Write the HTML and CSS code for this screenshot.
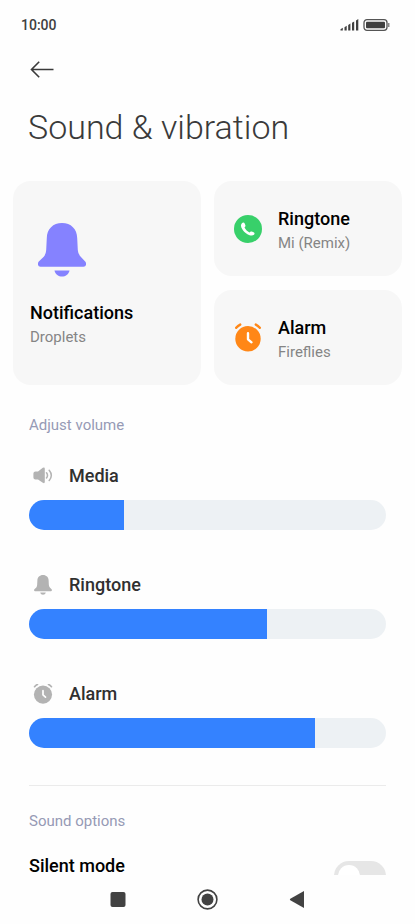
FILE: index.html
```html
<!DOCTYPE html>
<html lang="en">
<head>
<meta charset="utf-8">
<meta name="viewport" content="width=device-width, initial-scale=1">
<title>Sound &amp; vibration</title>
<link rel="stylesheet" href="styles.css">
</head>
<body>
<svg class="defs" aria-hidden="true">
  <symbol id="bell" viewBox="0 0 48 54">
    <path d="M24 0C33 0 39 6 39.200 15L39.800 27Q40 31 42.500 33.500L47.200 38.500C49 40.500 48 43.800 45.500 43.800H2.500C0 43.800-1 40.500.8 38.500L6 33.500Q8 31 8.200 27L8.800 15C9 6 15 0 24 0Z"/>
    <path d="M16.500 47.500H31.500C30.500 51.500 27.500 53.500 24 53.500S17.500 51.500 16.500 47.500Z"/>
  </symbol>
  <symbol id="clock" viewBox="0 0 28 28">
    <circle cx="14" cy="14.800" r="12.700"/>
    <path class="stroke-self" d="M2.200 3.800Q4 1.600 6.200.6M25.800 3.800Q24 1.600 21.800.6"/>
    <path class="stroke-hand" d="M14 9.300V15.300L17.500 18.300"/>
  </symbol>
</svg>

<div class="status-bar">
  <time>10:00</time>
  <div class="status-icons">
    <svg width="19" height="12" viewBox="0 0 19 12" aria-hidden="true">
      <path d="M.5 10.300l2.300-1.500V11.500H.5ZM4.500 8.200l2.200-1.400V11.500H4.500ZM8.200 6l2.200-1.400V11.500H8.200ZM12 3.800l2.200-1.400V11.500H12ZM16 1.400l2.300-1.400V11.500H16Z"/>
    </svg>
    <svg width="28" height="12" viewBox="0 0 28 12" aria-hidden="true">
      <rect class="battery-shell" x="1" y="0.700" width="23" height="10.600" rx="3"/>
      <rect x="3" y="2.800" width="19" height="6.400" rx="1"/>
      <path class="battery-tip" d="M25 4h1.500v4H25z"/>
    </svg>
  </div>
</div>

<main class="content">
  <header class="header">
    <button class="back" type="button" aria-label="Back">
      <svg width="24" height="18" viewBox="0 0 24 18" aria-hidden="true"><path d="M23.500 9.500H1.500M9.200 1.800L1.500 9.500L9.200 17.200"/></svg>
    </button>
    <h1>Sound &amp; vibration</h1>
  </header>

  <div class="cards">
    <button class="card card-tall" type="button">
      <svg class="bell-large" viewBox="0 0 48 54" aria-hidden="true"><use href="#bell"/></svg>
      <span class="card-text"><span class="card-title">Notifications</span><span class="card-value">Droplets</span></span>
    </button>
    <button class="card" type="button">
      <svg class="card-icon" viewBox="0 0 28 28" aria-hidden="true">
        <circle class="green" cx="14" cy="14" r="14"/>
        <path class="handset" d="M7.900 8.200C9 7.100 10.200 7.500 10.700 8.600L11.400 10.200C11.800 11.200 11 11.800 10.500 12.400C11.700 14.700 13.300 16.300 15.600 17.500C16.200 17 16.800 16.200 17.800 16.600L19.600 17.300C20.700 17.800 20.900 18.900 20 19.800C18.300 21.200 15.700 20.500 13.400 19.200C11 17.800 9.100 15.900 7.900 13.500C6.900 11.600 6.500 9.700 7.900 8.200Z"/>
      </svg>
      <span class="card-text"><span class="card-title">Ringtone</span><span class="card-value">Mi (Remix)</span></span>
    </button>
    <button class="card" type="button">
      <svg class="card-icon clock-orange" viewBox="0 0 28 28" aria-hidden="true"><use href="#clock"/></svg>
      <span class="card-text"><span class="card-title">Alarm</span><span class="card-value">Fireflies</span></span>
    </button>
  </div>

  <section class="section">
    <h2>Adjust volume</h2>
    <div class="volume">
      <label for="media">
        <svg viewBox="0 0 20 20" aria-hidden="true">
          <path d="M2.500 5.500H5L9.800 1.800Q11.800.6 11.800 2.800V15.800Q11.800 18 9.800 16.800L5 13.500H2.500Q.4 13.500.4 11.500V7.500Q.4 5.500 2.500 5.500Z"/>
          <path class="wave" d="M13.500 6.800Q15.500 9.400 13.500 12M16.200 4.300Q20.400 9.400 16.200 14.500"/>
        </svg>
        Media
      </label>
      <input id="media" type="range" min="0" max="15" value="4" style="--level: 26.7%">
    </div>
    <div class="volume">
      <label for="ringtone"><svg viewBox="0 0 48 54" aria-hidden="true"><use href="#bell"/></svg>Ringtone</label>
      <input id="ringtone" type="range" min="0" max="15" value="10" style="--level: 66.7%">
    </div>
    <div class="volume">
      <label for="alarm"><svg viewBox="0 0 28 28" aria-hidden="true"><use href="#clock"/></svg>Alarm</label>
      <input id="alarm" type="range" min="0" max="15" value="12" style="--level: 80%">
    </div>
  </section>

  <section class="section options">
    <h2>Sound options</h2>
    <label class="option">Silent mode<input type="checkbox" role="switch"></label>
  </section>
</main>

<nav class="system-nav" aria-label="System">
  <button type="button" aria-label="Recent apps"><svg viewBox="0 0 22 22" aria-hidden="true"><rect x="3.500" y="3" width="15" height="15" rx="2"/></svg></button>
  <button type="button" aria-label="Home"><svg viewBox="0 0 22 22" aria-hidden="true"><circle class="ring" cx="11.500" cy="10.500" r="9.400"/><circle cx="11.500" cy="10.500" r="6"/></svg></button>
  <button type="button" aria-label="Go back"><svg viewBox="0 0 22 22" aria-hidden="true"><path d="M4.300 9.800L18 2V19L4.300 11.200Q3.300 10.500 4.300 9.800Z"/></svg></button>
</nav>
</body>
</html>
```

FILE: styles.css
```css
* { box-sizing: border-box; }

body {
  margin: 0;
  height: 100vh;
  display: flex;
  flex-direction: column;
  background: #fefefe;
  color: #000;
  font-family: Roboto, sans-serif;
}

button {
  border: 0;
  padding: 0;
  background: none;
  color: inherit;
  font: inherit;
  text-align: left;
}

svg { display: block; flex: none; }

.defs { position: absolute; width: 0; height: 0; }

.status-bar {
  flex: none;
  height: 50px;
  padding: 0 24px 0 21px;
  display: flex;
  align-items: center;
  justify-content: space-between;
  color: #404040;
  font-size: 14px;
  font-weight: 500;
}

.status-icons { display: flex; gap: 4px; fill: #404040; }
.battery-shell { fill: none; stroke: #555; stroke-width: 1.3; }
.battery-tip { fill: #888; }

.content { flex: 1; min-height: 0; overflow: hidden; }

.header { padding: 10px 28px 0; color: #3a3a3a; }
.back { display: block; padding: 0 2px; }
.back svg { fill: none; stroke: #3a3a3a; stroke-width: 1.6; }

h1 {
  margin: 27px 0 32px;
  font-size: 34px;
  line-height: 44px;
  font-weight: 300;
}

.cards {
  display: grid;
  grid-template-columns: 1fr 1fr;
  grid-auto-rows: 95px;
  gap: 14px 13px;
  padding: 0 13px;
}

.card {
  display: flex;
  align-items: center;
  gap: 16px;
  padding: 0 20px;
  border-radius: 18px;
  background: #f7f7f7;
}

.card-tall {
  grid-row: span 2;
  flex-direction: column;
  align-items: flex-start;
  justify-content: center;
  gap: 18px;
  padding: 7px 17px 0;
}

.card-text { display: flex; flex-direction: column; padding-top: 6px; }
.card-title { font-size: 18px; line-height: 24px; font-weight: 500; }
.card-value { font-size: 15px; line-height: 25px; color: #858585; }
.card-icon { width: 28px; height: 28px; }
.bell-large { width: 48px; height: 54px; margin-left: 8px; fill: #8582ff; }

.green { fill: #38d06a; }
.handset { fill: #fff; }
.stroke-self, .stroke-hand {
  fill: none;
  stroke-width: 2.4;
  stroke-linecap: round;
  stroke-linejoin: round;
}
.stroke-hand { stroke: #fff; }
.clock-orange { fill: #ff8717; color: #ff8717; overflow: visible; }
.stroke-self { stroke: currentColor; }
symbol { overflow: visible; }

.section { margin: 0 29px; padding-top: 30px; }

h2 {
  margin: 0;
  color: #969ab5;
  font-size: 15px;
  line-height: 20px;
  font-weight: 400;
}

.volume { padding: 29px 0 14px; }
.volume label {
  display: flex;
  align-items: center;
  gap: 16px;
  padding-left: 4px;
  color: #303030;
  font-size: 18px;
  line-height: 24px;
  font-weight: 500;
}
.volume svg { width: 20px; height: 20px; fill: #b3b3b3; color: #b3b3b3; }
.wave { fill: none; stroke: #b3b3b3; stroke-width: 1.5; stroke-linecap: round; }

input[type="range"] {
  appearance: none;
  display: block;
  width: 100%;
  height: 30px;
  margin: 12px 0 0;
  border-radius: 15px;
  background: linear-gradient(to right, #3482ff var(--level), #edf1f4 var(--level));
}
input[type="range"]::-webkit-slider-thumb { appearance: none; width: 1px; height: 30px; opacity: 0; }

.options { margin-top: 23px; padding-top: 25px; border-top: 1px solid #ebebeb; }

.option {
  display: flex;
  align-items: flex-start;
  justify-content: space-between;
  padding-top: 23px;
  font-size: 18px;
  line-height: 24px;
  font-weight: 500;
}

.option input {
  appearance: none;
  width: 52px;
  height: 30px;
  margin: 7px 0 0;
  padding: 4px;
  border-radius: 15px;
  background: #e6e6e6;
}
.option input::before {
  content: "";
  display: block;
  width: 22px;
  height: 22px;
  border-radius: 50%;
  background: #fff;
}
.option input:checked { background: #3482ff; }
.option input:checked::before { margin-left: auto; }

.system-nav {
  flex: none;
  height: 49px;
  padding: 0 73px;
  display: flex;
  align-items: center;
  justify-content: space-around;
}
.system-nav svg { width: 22px; height: 22px; fill: #424242; }
.system-nav .ring { fill: none; stroke: #424242; stroke-width: 1.6; }
```
